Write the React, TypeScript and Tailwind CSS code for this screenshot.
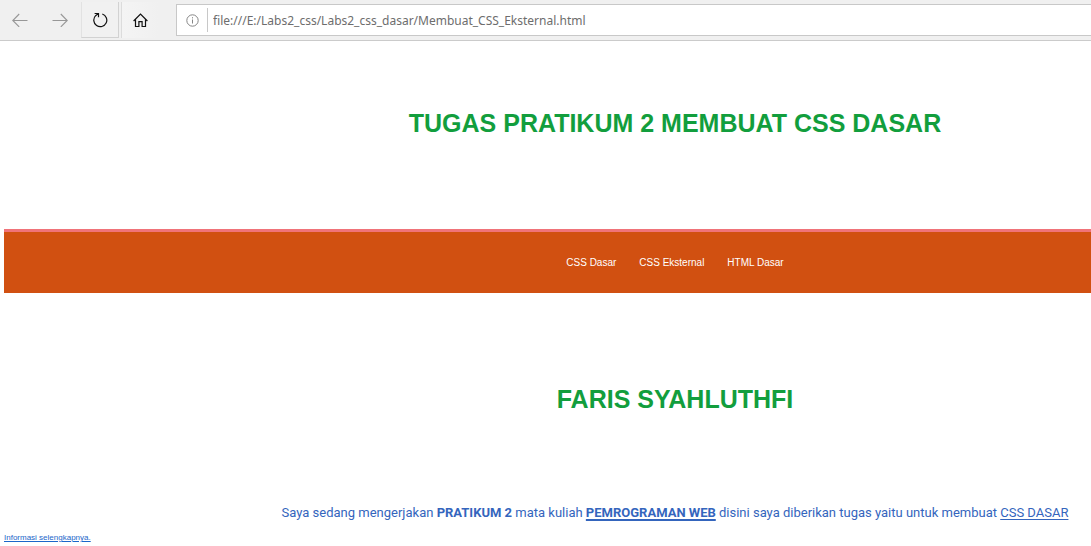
import type { ReactNode } from "react";

function ToolButton({ label, raised, disabled, children }: { label: string; raised?: boolean; disabled?: boolean; children: ReactNode }) {
  return (
    <button
      type="button"
      aria-label={label}
      disabled={disabled}
      className={
        raised
          ? "flex h-9 w-[38px] items-center justify-center border-r border-b border-l border-[#d2d2d2] border-l-[#e2e2e2] bg-[#f1f1f1]"
          : "flex h-9 w-[38px] items-center justify-center"
      }
    >
      {children}
    </button>
  );
}

function Toolbar() {
  return (
    <header className="flex h-[41px] items-center border-b border-[#cbcbcb] bg-[#f0f0f0] pl-px">
      <div className="flex gap-0.5">
        <ToolButton label="Kembali" disabled>
          <svg width="16" height="14" viewBox="0 0 16 14" fill="none" stroke="#979797" strokeWidth="1.1">
            <path d="M15.5 7.5H1M7.2 1L.8 7.5l6.4 6.4" />
          </svg>
        </ToolButton>
        <ToolButton label="Maju" disabled>
          <svg width="16" height="14" viewBox="0 0 16 14" fill="none" stroke="#979797" strokeWidth="1.1">
            <path d="M.5 7.5H15M8.8 1l6.4 6.5-6.4 6.4" />
          </svg>
        </ToolButton>
        <ToolButton label="Muat ulang" raised>
          <svg width="16" height="16" viewBox="0 0 16 16" fill="none" stroke="#111" strokeWidth="1.2">
            <path d="M10.3 2A6.5 6.5 0 1 1 3.6 3.7L6.2 1.6M2.6 1.5h3.9v3.7" />
          </svg>
        </ToolButton>
        <button
          type="button"
          aria-label="Beranda"
          className="flex h-9 w-[38px] items-center justify-center border-l border-[#dcdcdc] bg-linear-to-r from-[#f4f4f4] to-[#f0f0f0]"
        >
          <svg width="16" height="16" viewBox="0 0 16 16" fill="none" stroke="#111" strokeWidth="1.2">
            <path d="M.6 9L7.5 2l6.9 7M2.5 7.6v6.9h3.4V9.6h3.2v4.9h3.4V7.6" />
          </svg>
        </button>
      </div>
      <div className="ml-[17px] flex h-8 flex-1 items-center border border-r-0 border-[#c8c8c8] bg-white">
        <svg className="mr-2 ml-[9px] shrink-0" width="13" height="13" viewBox="0 0 13 13" fill="none" stroke="#858585">
          <circle cx="6.5" cy="6.5" r="5.7" />
          <path d="M6.5 5.5v4M6.5 3.2v1.2" />
        </svg>
        <input
          type="text"
          aria-label="Alamat"
          defaultValue="file:///E:/Labs2_css/Labs2_css_dasar/Membuat_CSS_Eksternal.html"
          className="h-6 min-w-0 flex-1 border-l border-[#c8c8c8] pl-[5px] font-['Noto_Sans',sans-serif] text-[12px] text-[#6d6d6d] outline-none"
        />
      </div>
    </header>
  );
}

export default function App() {
  return (
    <div className="min-h-screen bg-white font-['Liberation_Sans',sans-serif]">
      <Toolbar />
      <main className="pl-1 text-center text-[#3465bd]">
        <h1 className="pt-[66px] pb-[90px] pl-[255px] text-[25px] leading-8 font-bold text-[#129e3d]">
          TUGAS PRATIKUM 2 MEMBUAT CSS DASAR
        </h1>
        <nav className="flex h-16 items-center justify-center gap-[23px] border-t-[3px] border-[#f07379] bg-[#d15011] pl-[255px] text-[10px] text-white">
          <a href="#dasar">CSS Dasar</a>
          <a href="#eksternal">CSS Eksternal</a>
          <a href="#html">HTML Dasar</a>
        </nav>
        <h2 className="pt-[90px] pb-[87px] pl-[255px] text-[25px] leading-8 font-bold text-[#129e3d]">FARIS SYAHLUTHFI</h2>
        <p className="pl-[255px] font-['Roboto',sans-serif] text-[13px] leading-[21px]">
          Saya sedang mengerjakan <b>PRATIKUM 2</b> mata kuliah{" "}
          <b className="underline decoration-2 underline-offset-2">PEMROGRAMAN WEB</b> disini saya diberikan tugas yaitu untuk
          membuat <span className="underline underline-offset-2">CSS DASAR</span>
        </p>
        <a href="#info" className="mt-2.5 block w-fit text-[8px] leading-[10px] text-[#1b66c9] underline">
          Informasi selengkapnya.
        </a>
      </main>
    </div>
  );
}
